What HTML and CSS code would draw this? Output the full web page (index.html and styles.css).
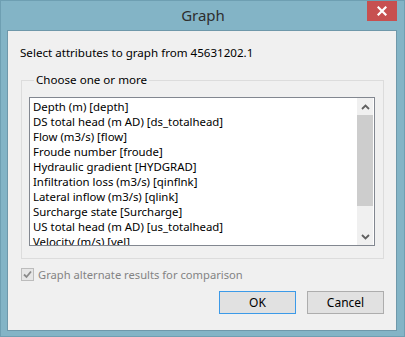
FILE: index.html
```html
<!DOCTYPE html>
<html>
<head>
<meta charset="utf-8">
<link rel="stylesheet" href="styles.css">
</head>
<body>
<div class="window">
  <div class="titlebar">
    <span class="spacer"></span>
    <span class="title">Graph</span>
    <button class="close" aria-label="Close">
      <svg width="10" height="10" viewBox="0 0 10 10"><path d="M1.5 1.5 L8.5 8.5 M8.5 1.5 L1.5 8.5" stroke="#fff" stroke-width="2.2" stroke-linecap="square"/></svg>
    </button>
  </div>
  <div class="client">
    <p class="prompt">Select attributes to graph from 45631202.1</p>
    <fieldset class="group">
      <legend class="group-label">Choose one or more</legend>
      <div class="listbox">
        <ul class="items">
          <li>Depth (m) [depth]</li>
          <li>DS total head (m AD) [ds_totalhead]</li>
          <li>Flow (m3/s) [flow]</li>
          <li>Froude number [froude]</li>
          <li>Hydraulic gradient [HYDGRAD]</li>
          <li>Infiltration loss (m3/s) [qinflnk]</li>
          <li>Lateral inflow (m3/s) [qlink]</li>
          <li>Surcharge state [Surcharge]</li>
          <li>US total head (m AD) [us_totalhead]</li>
          <li>Velocity (m/s) [vel]</li>
        </ul>
        <div class="scrollbar">
          <div class="arrow">
            <svg width="9" height="6" viewBox="0 0 9 6"><path d="M1 5 L4.5 1.5 L8 5" fill="none" stroke="#606060" stroke-width="1.8"/></svg>
          </div>
          <div class="track">
            <div class="thumb"></div>
          </div>
          <div class="arrow">
            <svg width="9" height="6" viewBox="0 0 9 6"><path d="M1 1 L4.5 4.5 L8 1" fill="none" stroke="#606060" stroke-width="1.8"/></svg>
          </div>
        </div>
      </div>
    </fieldset>
    <label class="check-row">
      <span class="checkbox">
        <svg width="11" height="11" viewBox="0 0 11 11"><path d="M2 5.5 L4.5 8 L9 2.5" fill="none" stroke="#8a8a8a" stroke-width="1.8"/></svg>
      </span>
      <span class="check-label">Graph alternate results for comparison</span>
    </label>
    <div class="buttons">
      <button class="btn btn-default">OK</button>
      <button class="btn">Cancel</button>
    </div>
  </div>
</div>
</body>
</html>
```

FILE: styles.css
```css
* { box-sizing: border-box; }
html, body { margin: 0; padding: 0; }
body {
  background: #83b4c6;
  font-family: "Noto Sans", "Open Sans", sans-serif;
}
.window {
  width: 405px;
  height: 337px;
  border: 1px solid #6e9fb2;
  background: #83b4c6;
  display: flex;
  flex-direction: column;
  padding: 0 7px 5px 6px;
}
.titlebar {
  height: 29px;
  display: grid;
  grid-template-columns: 1fr auto 1fr;
  align-items: start;
}
.title {
  font-size: 15px;
  line-height: 29px;
  color: #2e2e2e;
  padding-left: 2px;
}
.close {
  justify-self: end;
  width: 30px;
  height: 20px;
  margin: 0;
  padding: 0;
  border: none;
  background: #c75050;
  display: flex;
  align-items: center;
  justify-content: center;
}
.client {
  flex: 1;
  background: #f0f0f0;
  border: 1px solid #6f98aa;
  display: flex;
  flex-direction: column;
  padding: 0 12px 0 12px;
}
.prompt {
  margin: 14px 0 0 0;
  font-size: 11.6px;
  line-height: 16px;
  color: #000;
}
.group {
  margin: 11px 0 0 1px;
  padding: 9px 8px 12px 7px;
  border: 1px solid #dcdcdc;
  min-inline-size: 0;
}
.group-label {
  margin-left: 5px;
  padding: 0 2px;
  font-size: 11.6px;
  line-height: 16px;
  color: #000;
}
.listbox {
  height: 149px;
  border: 1px solid #828790;
  background: #fff;
  display: flex;
  padding: 0 1px 0 0;
}
.items {
  flex: 1;
  list-style: none;
  margin: 0;
  padding: 1px 3px 0 3px;
  overflow: hidden;
  font-size: 11.4px;
  line-height: 15px;
  color: #000;
  white-space: nowrap;
}
.scrollbar {
  width: 16px;
  display: flex;
  flex-direction: column;
  background: #f0f0f0;
}
.arrow {
  height: 17px;
  display: flex;
  align-items: center;
  justify-content: center;
}
.track {
  flex: 1;
  display: flex;
  flex-direction: column;
}
.thumb {
  height: 91px;
  background: #cdcdcd;
}
.check-row {
  margin: 9px 0 0 1px;
  display: flex;
  align-items: center;
  gap: 4px;
  height: 13px;
}
.checkbox {
  width: 13px;
  height: 13px;
  border: 1px solid #bcbcbc;
  background: #e6e6e6;
  display: flex;
  align-items: center;
  justify-content: center;
}
.check-label {
  font-size: 11.2px;
  line-height: 16px;
  color: #838383;
}
.buttons {
  margin-top: 10px;
  display: flex;
  justify-content: flex-end;
  gap: 11px;
}
.btn {
  width: 77px;
  height: 23px;
  margin: 0;
  padding: 0;
  border: 1px solid #adadad;
  background: #e1e1e1;
  font-family: "Noto Sans", "Open Sans", sans-serif;
  font-size: 12px;
  color: #000;
}
.btn-default {
  border-color: #3c9ae8;
}
```
